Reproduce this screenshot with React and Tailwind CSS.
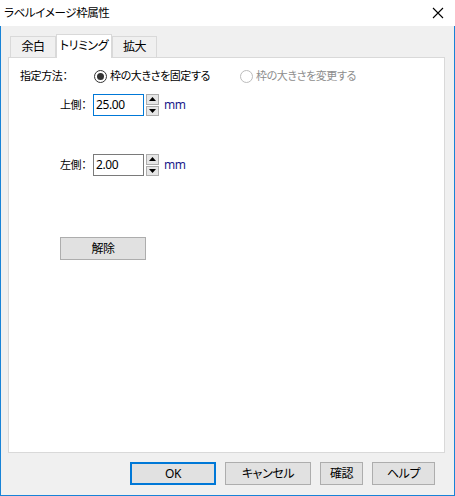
import React from 'react'

const font = "font-['Noto_Sans','Noto_Sans_CJK_JP',sans-serif] [font-feature-settings:'palt']"

function Radio({ checked, disabled }) {
  return (
    <span
      className={`flex h-[13px] w-[13px] items-center justify-center rounded-full border bg-white ${
        disabled ? 'border-[#bcbcbc]' : 'border-[#333333]'
      }`}
    >
      {checked && <span className="h-[7px] w-[7px] rounded-full bg-[#333333]" />}
    </span>
  )
}

function Spinner() {
  return (
    <div className="ml-[2px] flex h-[22px] w-[13px] flex-col gap-px">
      <div className="flex flex-1 items-center justify-center border border-[#adadad] bg-[#e6e6e6]">
        <svg width="7" height="4" viewBox="0 0 7 4">
          <path d="M3.5 0 L7 4 L0 4 Z" fill="#000" />
        </svg>
      </div>
      <div className="flex flex-1 items-center justify-center border border-[#adadad] bg-[#e6e6e6]">
        <svg width="7" height="4" viewBox="0 0 7 4">
          <path d="M0 0 L7 0 L3.5 4 Z" fill="#000" />
        </svg>
      </div>
    </div>
  )
}

function NumberRow({ label, value, focused, className }) {
  return (
    <div className={`ml-[40px] flex items-center ${className}`}>
      <span className="w-[33px]">{label}</span>
      <div
        className={`flex h-[22px] w-[51px] items-center border bg-white pl-[2px] text-[12px] ${
          focused ? 'border-[#0078d7]' : 'border-[#7a7a7a]'
        }`}
      >
        {value}
      </div>
      <Spinner />
      <span className="ml-[5px] text-[12px] text-[#1a1a8a]">mm</span>
    </div>
  )
}

function FooterButton({ children, width, primary }) {
  return (
    <button
      className={`flex h-[23px] items-center justify-center bg-[#e1e1e1] text-[12px] text-black ${width} ${
        primary ? 'border-2 border-[#0078d7]' : 'border border-[#adadad]'
      }`}
    >
      {children}
    </button>
  )
}

export default function App() {
  return (
    <div className={`flex h-[496px] w-[455px] flex-col bg-white text-[11px] tracking-[-0.4px] text-black ${font}`}>
      <div className="flex h-[26px] shrink-0 items-center justify-between pl-[4px] pr-[11px]">
        <span className="text-[11.5px]">ラベルイメージ枠属性</span>
        <svg width="12" height="12" viewBox="0 0 12 12">
          <path d="M1 1 L11 11 M11 1 L1 11" stroke="#000" strokeWidth="1.1" />
        </svg>
      </div>

      <div className="flex flex-1 flex-col border-x border-b border-[#1883d7] bg-[#f0f0f0]">
        <div className="ml-[9px] flex h-[31px] items-end pt-[8px]">
          <div className="flex h-[21px] w-[46px] items-center justify-center border-x border-t border-[#d9d9d9] text-[12px]">
            余白
          </div>
          <div className="relative z-10 -mb-px flex h-[24px] w-[56px] items-center justify-center border-x border-t border-[#d9d9d9] bg-white pb-[2px] text-[12px]">
            トリミング
          </div>
          <div className="flex h-[21px] w-[45px] items-center justify-center border-x border-t border-[#d9d9d9] text-[12px]">
            拡大
          </div>
        </div>

        <div className="ml-[7px] flex h-[396px] w-[437px] flex-col border border-[#d9d9d9] bg-white pl-[11px] pt-[8px]">
          <div className="flex h-[20px] items-center">
            <span className="w-[74px]">指定方法：</span>
            <div className="flex w-[146px] items-center gap-[3px]">
              <Radio checked />
              <span>枠の大きさを固定する</span>
            </div>
            <div className="flex items-center gap-[3px] text-[#8d8d8d]">
              <Radio disabled />
              <span>枠の大きさを変更する</span>
            </div>
          </div>

          <NumberRow label="上側：" value="25.00" focused className="mt-[8px]" />
          <NumberRow label="左側：" value="2.00" className="mt-[38px]" />

          <button className="ml-[40px] mt-[61px] flex h-[23px] w-[86px] items-center justify-center border border-[#adadad] bg-[#e1e1e1] text-[12px]">
            解除
          </button>
        </div>

        <div className="flex justify-end gap-[9px] pr-[19px] pt-[9px]">
          <FooterButton width="w-[86px]" primary>OK</FooterButton>
          <FooterButton width="w-[86px]">キャンセル</FooterButton>
          <FooterButton width="w-[43px]">確認</FooterButton>
          <FooterButton width="w-[63px]">ヘルプ</FooterButton>
        </div>
      </div>
    </div>
  )
}
